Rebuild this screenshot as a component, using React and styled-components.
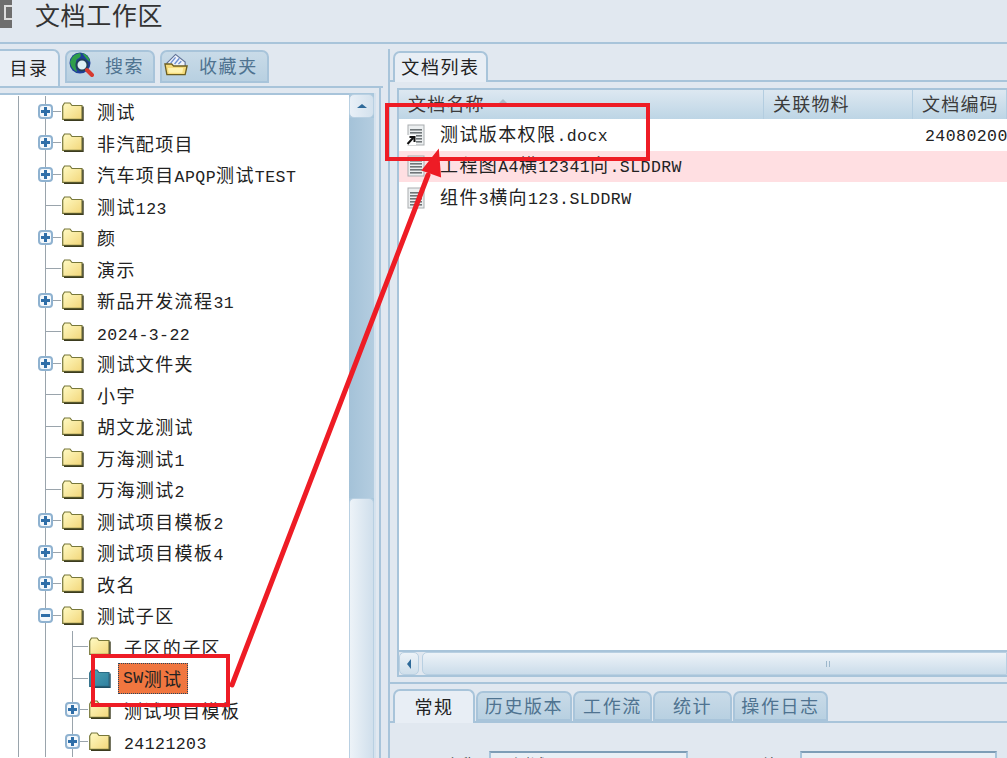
import React from 'react'
import styled, { createGlobalStyle } from 'styled-components'

const GlobalStyle = createGlobalStyle`
  html, body { margin: 0; padding: 0; background: #e1e8f0; }
  body { font-family: "Noto Sans CJK SC", "Liberation Sans", sans-serif; }
`

const LINE = '#a8c4da'
const GUIDE = '#9aa4ac'

const Page = styled.div`
  position: relative;
  width: 1007px;
  height: 758px;
  overflow: hidden;
  display: flex;
  flex-direction: column;
  background: #e1e8f0;
  color: #222;
`
const TitleBar = styled.div`
  flex: 0 0 44px;
  display: flex;
  align-items: flex-start;
  gap: 23px;
  box-sizing: border-box;
  border-bottom: 2px solid ${LINE};
`
const TitleIcon = styled.div`
  width: 12px;
  height: 28px;
  background: #6e6e6e;
  display: flex;
  align-items: center;
  justify-content: flex-end;
  &::after {
    content: '';
    width: 6px;
    height: 11px;
    margin-bottom: 4px;
    border: 2px solid #ddd;
    border-right: 0;
  }
`
const Title = styled.h1`
  margin: 0;
  height: 28px;
  line-height: 28px;
  font-size: 25px;
  font-weight: 400;
  letter-spacing: 0.6px;
  color: #333;
`
const Main = styled.div`
  flex: 1;
  min-height: 0;
  display: flex;
`
const LeftPane = styled.div`
  flex: 0 0 383px;
  display: flex;
  flex-direction: column;
  min-width: 0;
`
const TabStrip = styled.div`
  display: flex;
  align-items: flex-start;
  gap: ${p => p.$gap ?? 5}px;
  height: ${p => p.$h}px;
  padding-left: ${p => p.$pl || 0}px;
  padding-top: ${p => p.$pt || 0}px;
  box-sizing: border-box;
  border-bottom: 2px solid ${LINE};
  flex: none;
`
const Tab = styled.div`
  display: flex;
  align-items: center;
  justify-content: ${p => (p.$icon ? 'flex-start' : 'center')};
  gap: ${p => p.$gap || 0}px;
  box-sizing: border-box;
  width: ${p => p.$w}px;
  height: ${p => p.$h}px;
  padding-left: ${p => (p.$icon ? 2 : 0)}px;
  padding-bottom: 3px;
  margin-top: ${p => p.$top || 0}px;
  font-size: 18px;
  letter-spacing: 1.6px;
  border: 2px solid ${LINE};
  border-radius: 7px 7px 0 0;
  color: ${p => (p.$active ? '#222' : '#4f7390')};
  background: ${p => (p.$active ? '#e8eef5' : 'linear-gradient(#c9dbe8, #b8d0e1)')};
  ${p => p.$active && 'border-bottom: 0;'}
  ${p => p.$edge && 'border-left: 0; border-radius: 0 7px 0 0;'}
`
const TreeFrame = styled.div`
  flex: 1;
  min-height: 0;
  display: flex;
  padding: 5px 3px 0 0;
  border-right: 2px solid ${LINE};
  margin-right: 2px;
`
const TreePanel = styled.div`
  flex: 1;
  min-width: 0;
  background: #fff;
  padding-top: 0.5px;
  overflow: hidden;
  border-top: 2px solid ${LINE};
`
const Row = styled.div`
  height: 31.5px;
  display: flex;
  align-items: center;
  box-sizing: border-box;
  padding-left: ${p => 38 + p.$level * 27}px;
  font-size: 18px;
  letter-spacing: 1.4px;
  white-space: nowrap;
  background-repeat: no-repeat;
  background-image:
    linear-gradient(${GUIDE}, ${GUIDE}),
    linear-gradient(${GUIDE}, ${GUIDE}),
    linear-gradient(${GUIDE}, ${GUIDE})
    ${p => (p.$level ? `, linear-gradient(${GUIDE}, ${GUIDE})` : '')};
  background-size: 1px 100%, 1px 100%, 16px 1px ${p => (p.$level ? ', 1px 100%' : '')};
  background-position:
    18px 0,
    45px 0,
    ${p => 45 + p.$level * 27}px 50%
    ${p => (p.$level ? ', 72px 0' : '')};
`
const ExpanderBox = styled.div`
  flex: none;
  width: 15px;
  height: 15px;
  box-sizing: border-box;
  border: 2px solid #8fb2d0;
  border-radius: 4px;
  background: #f4f8fc;
  display: flex;
  align-items: center;
  justify-content: center;
`
const ExpanderSlot = styled.div`
  flex: none;
  width: 24px;
`
const Label = styled.span`
  margin-left: ${p => (p.$selected ? 7 : 13)}px;
  ${p => p.$selected && `
    display: flex;
    align-items: center;
    height: 31px;
    padding: 0 5px;
    background: #f0763f;
    outline: 1px dotted #27465e;
    outline-offset: -1px;
  `}
`
const Latin = styled.span`
  font-family: "Liberation Mono", monospace;
  font-size: 16.5px;
  letter-spacing: 0.45px;
`
const ScrollV = styled.div`
  flex: 0 0 25px;
  display: flex;
  flex-direction: column;
  background: #aac7dc;
  border-right: 2px solid #d5e2ee;
  box-sizing: content-box;
`
const ScrollButton = styled.div`
  flex: none;
  height: 24px;
  margin-top: 1px;
  box-sizing: border-box;
  border: 1px solid #b9d0e2;
  border-radius: 5px;
  background: linear-gradient(90deg, #e9f0f7, #d3e1ed);
  display: flex;
  align-items: center;
  justify-content: center;
  &::after {
    content: '';
    border: 5px solid transparent;
    border-top: 0;
    border-bottom: 4px solid #2f6a99;
  }
`
const ScrollSpace = styled.div`
  flex: 0 0 380px;
  background: linear-gradient(90deg, #a4c2d8, #b4cde0);
`
const ScrollThumb = styled.div`
  flex: 1;
  box-sizing: border-box;
  border: 1px solid #b9d0e2;
  border-bottom: 0;
  border-radius: 5px 5px 0 0;
  background: linear-gradient(90deg, #edf3f8, #d0dfec);
`
const Splitter = styled.div`
  flex: 0 0 5px;
`
const RightPane = styled.div`
  flex: 1;
  min-width: 0;
  display: flex;
  flex-direction: column;
  border-left: 2px solid ${LINE};
  margin-top: 5px;
`
const ListArea = styled.div`
  flex: 0 0 635px;
  display: flex;
  flex-direction: column;
  border-bottom: 2px solid ${LINE};
  box-sizing: border-box;
`
const ListFrame = styled.div`
  flex: 1;
  min-height: 0;
  margin: 6px 0 5px 7px;
  display: flex;
  flex-direction: column;
  border-left: 2px solid ${LINE};
  border-top: 2px solid ${LINE};
  border-bottom: 2px solid ${LINE};
  background: #fff;
`
const HeaderRow = styled.div`
  flex: 0 0 29px;
  display: grid;
  grid-template-columns: 365px 149px 1fr;
  background: linear-gradient(#dde8f1, #bdd5e5);
`
const HeaderCell = styled.div`
  display: flex;
  align-items: center;
  gap: 12px;
  padding-left: 9px;
  padding-bottom: 3px;
  font-size: 18px;
  letter-spacing: 1.2px;
  color: #3b3b3b;
  border-right: 1px solid #b3cde0;
  white-space: nowrap;
  &::after {
    ${p => p.$sorted && `
      content: '';
      margin-top: -2px;
      border: 6px solid transparent;
      border-top: 0;
      border-bottom: 6px solid #aab9c6;
    `}
  }
`
const ListBody = styled.div`
  flex: 1;
  min-height: 0;
`
const FileRow = styled.div`
  height: 31.5px;
  display: grid;
  grid-template-columns: 365px 149px 1fr;
  align-items: center;
  background: ${p => (p.$warn ? '#ffdfe2' : '#fff')};
  font-size: 18px;
  letter-spacing: 1.4px;
  white-space: nowrap;
`
const FileName = styled.div`
  display: flex;
  align-items: center;
  gap: 15px;
  padding-left: 7px;
`
const FileText = styled.span`
  margin-bottom: 4px;
`
const Code = styled.div`
  grid-column: 3;
  padding-left: 12px;
  margin-top: -4px;
  overflow: hidden;
`
const ScrollH = styled.div`
  flex: 0 0 25px;
  display: flex;
  align-items: stretch;
  box-sizing: border-box;
  border-top: 2px solid ${LINE};
  background: #e1e8f0;
`
const ArrowLeft = styled.div`
  flex: 0 0 20px;
  box-sizing: border-box;
  border: 1px solid #b9d0e2;
  border-radius: 5px;
  background: linear-gradient(#edf3f8, #cfdfeb);
  display: flex;
  align-items: center;
  justify-content: center;
  &::after {
    content: '';
    border: 5px solid transparent;
    border-left: 0;
    border-right: 4px solid #2f6a99;
  }
`
const HandleH = styled.div`
  flex: 1;
  margin-left: 3px;
  border: 1px solid #b9d0e2;
  border-radius: 5px 0 0 5px;
  background: linear-gradient(#edf3f8, #cbdcea);
  display: flex;
  align-items: center;
  justify-content: center;
  &::after {
    content: '';
    width: 2px;
    height: 6px;
    margin-left: 226px;
    border-left: 1px solid #9db8cc;
    border-right: 1px solid #9db8cc;
  }
`
const DetailArea = styled.div`
  flex: 1;
  min-height: 0;
  display: flex;
  flex-direction: column;
  padding-top: 5px;
`
const Form = styled.div`
  display: grid;
  grid-template-columns: 99px 199px 112px 197px;
  align-items: start;
  padding-top: 28px;
  font-size: 15px;
`
const FormLabel = styled.div`
  text-align: right;
  padding-right: ${p => p.$pr}px;
  line-height: 22px;
  padding-top: 2px;
  color: #333;
`
const Field = styled.div`
  height: 28px;
  box-sizing: border-box;
  border: 2px solid ${LINE};
  border-top-color: #7e9db6;
  background: #e9eff5;
  padding-left: 2px;
  line-height: 22px;
  font-size: 16px;
  overflow: hidden;
`
const Overlay = styled.svg`
  position: absolute;
  left: 0;
  top: 0;
  pointer-events: none;
`

const Mixed = ({ text }) =>
  text.split(/([\x00-\x7f]+)/).map((part, i) =>
    /^[\x00-\x7f]+$/.test(part) ? <Latin key={i}>{part}</Latin> : part
  )

const Expander = ({ open }) => (
  <ExpanderBox>
    <svg width="9" height="9" viewBox="0 0 9 9">
      <rect x="0" y="3" width="9" height="3" fill="#2f6ea8" />
      {!open && <rect x="3" y="0" width="3" height="9" fill="#2f6ea8" />}
    </svg>
  </ExpanderBox>
)

const Folder = ({ selected }) => (
  <svg width="22" height="19" viewBox="0 0 22 19" style={{ flex: 'none' }}>
    <defs>
      <linearGradient id="fy" x1="0" y1="0" x2="1" y2="1">
        <stop offset="0" stopColor="#fffbc4" />
        <stop offset="1" stopColor="#f2d67a" />
      </linearGradient>
      <linearGradient id="fb" x1="0" y1="0" x2="1" y2="1">
        <stop offset="0" stopColor="#4ea6b4" />
        <stop offset="1" stopColor="#2f7fa0" />
      </linearGradient>
    </defs>
    <path
      d="M0.7 4 L2.5 1 H8 L10 3.5 H20 V17.4 H0.7 Z"
      fill={selected ? 'url(#fb)' : 'url(#fy)'}
      stroke={selected ? '#2a6b85' : '#77773a'}
      strokeWidth="1.2"
    />
    <path d="M21 4.5 V18.3 H2" fill="none" stroke={selected ? '#1f4e63' : '#3b3b1e'} strokeWidth="1.4" />
  </svg>
)

const SearchIcon = () => (
  <svg width="25" height="26" viewBox="0 0 25 26" style={{ flex: 'none' }}>
    <circle cx="11" cy="11" r="10.5" fill="#1f3f9a" />
    <path d="M1 10 Q3 2 11 1 Q13 4 10 6 Q7 7 7 10 Q6 15 8 20 Q2 17 1 10Z" fill="#2f9e4a" />
    <path d="M13 1 Q20 3 21 10 Q18 8 16 5Z" fill="#2f9e4a" />
    <circle cx="13" cy="13" r="5.5" fill="#dff0f5" stroke="#21405a" strokeWidth="2" />
    <path d="M18 18 L23 23" stroke="#d63a2f" strokeWidth="4" strokeLinecap="round" />
  </svg>
)

const FavIcon = () => (
  <svg width="25" height="24" viewBox="0 0 26 24" style={{ flex: 'none' }}>
    <path d="M3 10 L12 1 L22 9 V14 H3Z" fill="#eef2fa" stroke="#5f7196" strokeWidth="1.2" />
    <path d="M7 10 L12 4 M11 11 L16 5 M15 11 L18 8" stroke="#6d8fd0" strokeWidth="1.4" />
    <path d="M1 11 L8 11 L10 13 H24 L22 22 H3 Z" fill="#f6dc7c" stroke="#6e5f20" strokeWidth="1.4" />
    <path d="M4 15 H20 L19 20 H5Z" fill="#fff3b0" />
  </svg>
)

const DocIcon = ({ shortcut }) => (
  <svg width="19" height="22" viewBox="0 0 19 22" style={{ flex: 'none' }}>
    <rect x="2" y="1" width="16" height="20" fill="#eceff0" stroke="#a9adb0" />
    {[5, 8, 11, 14, 17].map(y => (
      <rect key={y} x="4" y={y} width="12" height="1.6" fill="#6f7578" />
    ))}
    {shortcut && (
      <>
        <rect x="0" y="11" width="10" height="10" fill="#fff" />
        <path d="M1.5 20 L7 14 M3.5 13 H8.5 V18" fill="none" stroke="#111" strokeWidth="2" />
      </>
    )}
  </svg>
)

const treeItems = [
  { name: '测试', exp: 1 },
  { name: '非汽配项目', exp: 1 },
  { name: '汽车项目APQP测试TEST', exp: 1 },
  { name: '测试123' },
  { name: '颜', exp: 1 },
  { name: '演示' },
  { name: '新品开发流程31', exp: 1 },
  { name: '2024-3-22' },
  { name: '测试文件夹', exp: 1 },
  { name: '小宇' },
  { name: '胡文龙测试' },
  { name: '万海测试1' },
  { name: '万海测试2' },
  { name: '测试项目模板2', exp: 1 },
  { name: '测试项目模板4', exp: 1 },
  { name: '改名', exp: 1 },
  { name: '测试子区', exp: 1, open: 1 },
  { name: '子区的子区', level: 1 },
  { name: 'SW测试', level: 1, selected: 1 },
  { name: '测试项目模板', level: 1, exp: 1 },
  { name: '24121203', level: 1, exp: 1 },
]

const files = [
  { name: '测试版本权限.docx', code: '24080200', shortcut: 1 },
  { name: '工程图A4横12341向.SLDDRW', warn: 1 },
  { name: '组件3横向123.SLDDRW' },
]

const detailTabs = [
  ['历史版本', 96],
  ['工作流', 79],
  ['统计', 79],
  ['操作日志', 95],
]

export default function App() {
  return (
    <Page>
      <GlobalStyle />
      <TitleBar>
        <TitleIcon />
        <Title>文档工作区</Title>
      </TitleBar>
      <Main>
        <LeftPane>
          <TabStrip $h={44} $pt={5}>
            <Tab $active $edge $w={60} $h={37}>目录</Tab>
            <Tab $icon $w={90} $h={33} $gap={11} $top={1}><SearchIcon />搜索</Tab>
            <Tab $icon $w={109} $h={33} $gap={10} $top={1}><FavIcon />收藏夹</Tab>
          </TabStrip>
          <TreeFrame>
            <TreePanel>
              {treeItems.map(item => (
                <Row key={item.name} $level={item.level || 0}>
                  <ExpanderSlot>{item.exp && <Expander open={item.open} />}</ExpanderSlot>
                  <Folder selected={item.selected} />
                  <Label $selected={item.selected}><Mixed text={item.name} /></Label>
                </Row>
              ))}
            </TreePanel>
            <ScrollV>
              <ScrollButton />
              <ScrollSpace />
              <ScrollThumb />
            </ScrollV>
          </TreeFrame>
        </LeftPane>
        <Splitter />
        <RightPane>
          <ListArea>
            <TabStrip $h={33} $pl={3} $pt={2}>
              <Tab $active $w={95} $h={31}>文档列表</Tab>
            </TabStrip>
            <ListFrame>
              <HeaderRow>
                <HeaderCell $sorted>文档名称</HeaderCell>
                <HeaderCell>关联物料</HeaderCell>
                <HeaderCell>文档编码</HeaderCell>
              </HeaderRow>
              <ListBody>
                {files.map(file => (
                  <FileRow key={file.name} $warn={file.warn}>
                    <FileName>
                      <DocIcon shortcut={file.shortcut} />
                      <FileText><Mixed text={file.name} /></FileText>
                    </FileName>
                    {file.code && <Code><Latin>{file.code}</Latin></Code>}
                  </FileRow>
                ))}
              </ListBody>
              <ScrollH>
                <ArrowLeft />
                <HandleH />
              </ScrollH>
            </ListFrame>
          </ListArea>
          <DetailArea>
            <TabStrip $h={34} $pl={3} $gap={1}>
              <Tab $active $w={82} $h={34}>常规</Tab>
              {detailTabs.map(([label, w]) => (
                <Tab key={label} $w={w} $h={30} $top={2}>{label}</Tab>
              ))}
            </TabStrip>
            <Form>
              <FormLabel $pr={13}>名称</FormLabel>
              <Field><Mixed text="SW测试" /></Field>
              <FormLabel $pr={8}>编码</FormLabel>
              <Field />
            </Form>
          </DetailArea>
        </RightPane>
      </Main>
      <Overlay width="1007" height="758" viewBox="0 0 1007 758">
        <g fill="none" stroke="#ee1c25" strokeWidth="4">
          <rect x="387" y="105" width="261" height="54" />
          <rect x="93" y="656" width="135" height="49" />
        </g>
        <path d="M232 685 L428 175" stroke="#ee1c25" strokeWidth="5" strokeLinecap="round" />
        <path d="M438 151 L423 170 L440 176 Z" fill="#ee1c25" stroke="#ee1c25" strokeWidth="2" />
      </Overlay>
    </Page>
  )
}
